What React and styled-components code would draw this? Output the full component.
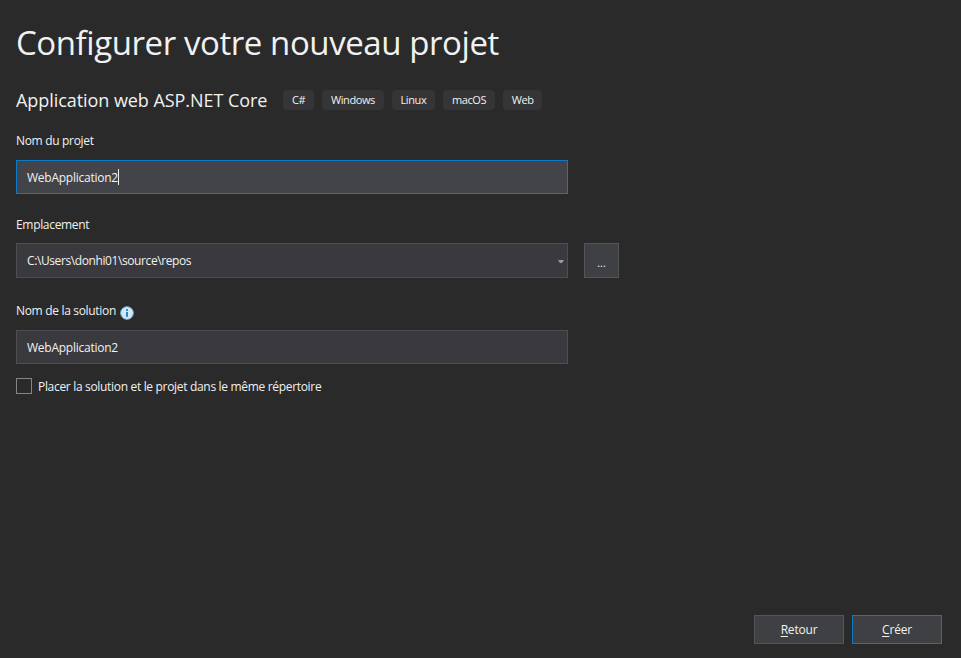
import React from "react";
import styled, { createGlobalStyle } from "styled-components";

const Global = createGlobalStyle`
  html, body { margin: 0; padding: 0; background: #2a2a2b; }
  body { font-family: "Open Sans", "Noto Sans", "Liberation Sans", sans-serif; color: #f1f1f1; }
`;
const Page = styled.div`
  width: 961px; height: 658px; box-sizing: border-box; padding: 0 19px 14px 16px;
  display: flex; flex-direction: column; overflow: hidden;
`;
const Title = styled.h1`
  margin: 21px 0 0; font-size: 33px; line-height: 44px; font-weight: 400; height: 44px; letter-spacing: -0.42px;
`;
const SubRow = styled.div`
  display: flex; align-items: center; margin-top: 23px; height: 24px;
`;
const Subtitle = styled.div`font-size: 18px; line-height: 24px; margin-right: 16px; letter-spacing: -0.06px;`;
const Chips = styled.div`display: flex; gap: 8px;`;
const Chip = styled.span`
  height: 20px; line-height: 20px; padding: 0 8.8px; background: #353537; border-radius: 4px; font-size: 11px; letter-spacing: -0.4px;
`;
const Label = styled.label`
  display: flex; align-items: center; gap: 3px; font-size: 12px; letter-spacing: -0.32px; line-height: 16px; height: 16px; margin-top: ${p => p.$top}px;
`;
const Field = styled.div`
  display: flex; align-items: center; box-sizing: border-box; width: 552px; height: ${p => p.$h || 34}px; padding: 0 10px;
  margin-top: ${p => p.$top}px; font-size: 12px; letter-spacing: ${p => p.$tight ? "-0.4px" : "-0.25px"};
  background: ${p => p.$focus ? "#434449" : "#3a3a3e"};
  border: 1px solid ${p => p.$focus ? "#0a7ac9" : "#4e4e50"};
`;
const Caret = styled.span`display: inline-block; width: 1px; height: 16px; background: #f1f1f1;`;
const Row = styled.div`display: flex; gap: 16px; margin-top: ${p => p.$top}px;`;
const Grow = styled.span`flex: 1;`;
const Browse = styled.button`
  width: 35px; height: 35px; padding: 4px 0 0; background: #3f4044; border: 1px solid #555557; color: #f1f1f1;
  font: inherit; font-size: 11px;
`;
const CheckRow = styled.div`display: flex; align-items: flex-start; gap: 6px; margin-top: 14px; height: 16px; font-size: 12px; letter-spacing: -0.32px;`;
const CheckText = styled.span`line-height: 16px; padding-top: 1px;`;
const Box = styled.span`width: 14px; height: 14px; border: 1px solid #858585;`;
const Footer = styled.div`display: flex; justify-content: flex-end; gap: 8px; margin-top: auto;`;
const Action = styled.button`
  width: 90px; height: 29px; padding: 0; color: #f1f1f1; background: #3f4044; font: inherit; font-size: 12px; letter-spacing: -0.2px;
  box-sizing: border-box; border: 1px solid ${p => p.$primary ? "#0a7ac9" : "#555557"};
`;
const Key = styled.span`text-decoration: underline; text-underline-offset: 2px;`;
const ArrowSvg = styled.svg`margin-right: -7px; margin-top: 1px;`;
const InfoSvg = styled.svg`margin: 4px 0 0 1px;`;

const InfoIcon = () => (
  <InfoSvg width="14" height="14" viewBox="0 0 14 14" aria-hidden="true">
    <circle cx="7" cy="7" r="6.3" fill="#d3e8f7" stroke="#7fb4dc" strokeWidth="1" />
    <rect x="6" y="6" width="2" height="4.8" fill="#2f83c4" />
    <rect x="6" y="3.1" width="2" height="1.9" fill="#2f83c4" />
  </InfoSvg>
);
const Arrow = () => (
  <ArrowSvg width="6" height="3" viewBox="0 0 6 3" aria-hidden="true">
    <path d="M0 0h6L4 3H2z" fill="#999" />
  </ArrowSvg>
);

export default function App() {
  return (
    <Page>
      <Global />
      <Title>Configurer votre nouveau projet</Title>
      <SubRow>
        <Subtitle>Application web ASP.NET Core</Subtitle>
        <Chips>
          {["C#", "Windows", "Linux", "macOS", "Web"].map(c => <Chip key={c}>{c}</Chip>)}
        </Chips>
      </SubRow>
      <Label $top={21}>Nom du projet</Label>
      <Field $focus $top={11}>WebApplication2<Caret /></Field>
      <Label $top={23}>Emplacement</Label>
      <Row $top={10}>
        <Field $h={35} $top={0} $tight>C:\Users\donhi01\source\repos<Grow /><Arrow /></Field>
        <Browse>...</Browse>
      </Row>
      <Label $top={25}>Nom de la solution <InfoIcon /></Label>
      <Field $top={11}>WebApplication2</Field>
      <CheckRow><Box /><CheckText>Placer la solution et le projet dans le même répertoire</CheckText></CheckRow>
      <Footer>
        <Action><Key>R</Key>etour</Action>
        <Action $primary><Key>C</Key>réer</Action>
      </Footer>
    </Page>
  );
}
